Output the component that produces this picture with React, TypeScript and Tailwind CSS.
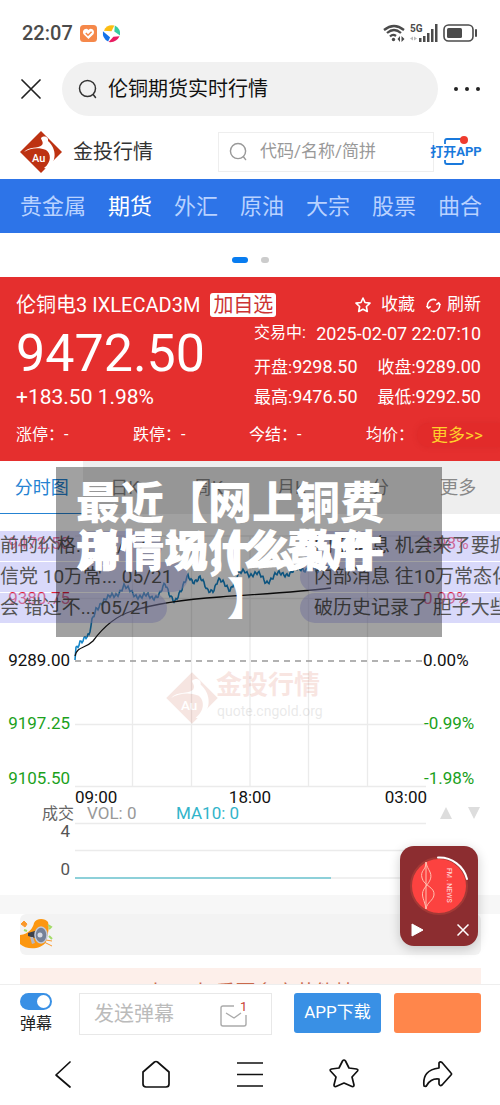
import React from "react";

const categories = ["贵金属", "期货", "外汇", "原油", "大宗", "股票", "曲合"];
const periods = ["分时图", "日K", "周K", "月K", "5分", "更多"];

const pricePoints: [number, number][] = [
  [75, 660], [76, 648], [80, 640], [85, 638], [89, 638], [92, 622], [96, 608], [101, 602],
  [107, 600], [112, 596], [118, 592], [124, 587], [127, 590], [134, 593], [142, 597], [152, 597],
  [160, 593], [165, 586], [169, 594], [175, 599], [182, 591], [188, 576], [194, 580], [200, 579],
  [207, 590], [214, 588], [218, 581], [223, 584], [230, 588], [237, 577], [245, 571], [250, 573],
  [258, 575], [266, 581], [275, 576], [290, 572], [300, 570], [310, 566], [318, 575], [322, 564],
  [331, 566],
];

function buildPricePath() {
  let path = "M75 660";
  for (let i = 1; i < pricePoints.length; i++) {
    const [x0, y0] = pricePoints[i - 1];
    const [x1, y1] = pricePoints[i];
    const steps = Math.max(1, Math.round(x1 - x0));
    for (let s = 1; s <= steps; s++) {
      const x = x0 + ((x1 - x0) * s) / steps;
      const wobble = Math.sin(x * 12.9) * 2.6 + Math.sin(x * 4.7) * 1.8;
      const y = y0 + ((y1 - y0) * s) / steps + wobble;
      path += ` L${x.toFixed(1)} ${y.toFixed(1)}`;
    }
  }
  return path;
}

function GoldLogo({ className }: { className?: string }) {
  return (
    <svg viewBox="0 0 44 44" className={className} aria-hidden="true">
      <path d="M22 1 43 22 22 43 1 22Z" fill="#bd3212" />
      <path
        d="M5 22C10 16 19 19 23 15C25 12 22 10 22 8C25 5 30 7 29 11C38 19 38 32 28 39L25 38C33 32 32 23 27 20C20 17 11 18 5 22Z"
        fill="#fff"
      />
      <text x="13" y="32" fill="#fff" fontSize="11" className="font-medium">Au</text>
    </svg>
  );
}

function StatusBar() {
  return (
    <div className="flex h-[62px] items-center px-[22px] pt-1 text-[#4b4b4b]">
      <span className="text-[20px] font-medium leading-6">22:07</span>
      <svg viewBox="0 0 17 17" className="ml-[7px] size-[17px]" aria-hidden="true">
        <rect width="17" height="17" rx="3.5" fill="#f5884a" />
        <path d="M8.5 14 3.6 9.2C1.500 6 5.500 1.800 8.500 5C11.500 1.800 15.500 6 13.400 9.200Z" fill="#fff" />
        <path d="m5.800 8 2.200 2.200 3.600-3.400" fill="none" stroke="#f5884a" strokeWidth="1.500" />
      </svg>
      <svg viewBox="0 0 20 20" className="ml-[5px] size-[19px]" aria-hidden="true">
        <path d="M2 7Q5 0 13 1.500L10 7.500Z" fill="#fcbd12" />
        <path d="M13.500 1.500Q20 5 19 12L13 8Z" fill="#35cda1" />
        <path d="M18.500 13Q15 20 7 19L12 13.500Z" fill="#e91c61" />
        <path d="M6.500 18.500Q0 15 1 7.500L8.500 14Z" fill="#1473eb" />
      </svg>
      <div className="ml-auto flex items-center gap-[5px]">
        <svg viewBox="0 0 22 18" className="h-[18px] w-[22px]" fill="none" stroke="#4b4b4b" strokeWidth="2.3" aria-hidden="true">
          <path d="M1 6Q11-2 21 6M4 9Q11 3 18 9M7 12.500Q10 9.500 13 12" />
          <circle cx="10.500" cy="15.500" r="1.700" fill="#4b4b4b" stroke="none" />
          <path d="m14.500 15 2.500-3v6Zm7 0-3-3v6Z" fill="#4b4b4b" stroke="none" />
        </svg>
        <svg viewBox="0 0 28 18" className="h-[18px] w-7" fill="#4b4b4b" aria-hidden="true">
          <text x="0" y="8" fontSize="10" className="font-bold">5G</text>
          <path d="M9 14h2.500v4H9zM13 12h2.500v6h-2.500zM17 9h2.500v9H17zM21 5h2.500v13H21zM25 0h2.500v18H25z" />
          <path d="m0 14.500 3-2v4Zm7 0-3-2v4Z" fill="#bbb" />
        </svg>
        <svg viewBox="0 0 35 18" className="h-[18px] w-[35px]" aria-hidden="true">
          <rect x="1" y="1" width="29" height="16" rx="4.500" fill="none" stroke="#4b4b4b" strokeWidth="1.600" />
          <rect x="4" y="4" width="15" height="10" rx="1.500" fill="#4b4b4b" />
          <path d="M33 6v6" stroke="#4b4b4b" strokeWidth="2" strokeLinecap="round" />
        </svg>
      </div>
    </div>
  );
}

function SearchIcon({ className }: { className?: string }) {
  return (
    <svg viewBox="0 0 20 20" className={className} fill="none" stroke="currentColor" strokeWidth="1.500" strokeLinecap="round" aria-hidden="true">
      <circle cx="9.500" cy="9.500" r="8" />
      <path d="m15.200 15.500 2.300 3" />
    </svg>
  );
}

function BrowserHeader() {
  return (
    <div className="flex items-center pr-[19px] pl-[21px]">
      <button aria-label="关闭" className="size-5">
        <svg viewBox="0 0 20 20" stroke="#222" strokeWidth="1.700" strokeLinecap="round">
          <path d="m1 1 18 18M19 1 1 19" />
        </svg>
      </button>
      <button className="ml-[21px] flex h-[54px] flex-1 items-center gap-[10px] rounded-full bg-[#f1f1f1] pl-4 text-[20px] text-[#111]">
        <SearchIcon className="size-5 text-[#333]" />
        伦铜期货实时行情
      </button>
      <button aria-label="更多选项" className="ml-[15px]">
        <svg viewBox="0 0 28 6" className="h-[6px] w-7" fill="#222">
          <circle cx="3" cy="3" r="2" /><circle cx="14" cy="3" r="2" /><circle cx="25" cy="3" r="2" />
        </svg>
      </button>
    </div>
  );
}

function SiteHeader() {
  return (
    <header className="flex h-[63px] items-center pt-2 pr-[18px] pl-[19px]">
      <GoldLogo className="size-11" />
      <h1 className="ml-[10px] text-[20px] text-[#333]">金投行情</h1>
      <label className="ml-auto flex h-10 w-[216px] items-center border border-[#eee] pl-[10px] text-[#999]">
        <SearchIcon className="size-[19px] shrink-0" />
        <input aria-label="搜索行情" placeholder="代码/名称/简拼" className="ml-3 w-full min-w-0 text-[17px] outline-none placeholder:text-[#999]" />
      </label>
      <a href="#app" className="relative -ml-1 flex h-8 w-[52px] shrink-0 items-center justify-center text-[13px] font-bold whitespace-nowrap text-[#1979dc]">
        <svg viewBox="0 0 52 32" className="absolute inset-0" fill="none" stroke="#1979dc" strokeWidth="1.800" aria-hidden="true">
          <path d="M15 8V5q0-2 2-2h15M15 24v2q0 2 2 2h14q2 0 2-2v-2" />
          <circle cx="34" cy="4" r="4" fill="#ef3b2d" stroke="none" />
        </svg>
        <span className="relative">打开APP</span>
      </a>
    </header>
  );
}

function Stat({ label, value }: { label: string; value: string }) {
  return (
    <span className="text-[17px] whitespace-nowrap">
      {label}:<span className="text-[18px]">{value}</span>
    </span>
  );
}

function QuotePanel() {
  return (
    <section className="bg-[#e52f2e] pt-[14px] pb-3 text-white">
      <div className="flex h-7 items-center pr-[19px] pl-4">
        <h2 className="text-[20px] whitespace-nowrap">伦铜电3 IXLECAD3M</h2>
        <button className="ml-[10px] h-6 rounded-[3px] bg-white px-[3px] text-[20px] leading-6 whitespace-nowrap text-[#cc3434]">加自选</button>
        <button className="ml-auto flex items-center gap-[10px] text-[17px]">
          <svg viewBox="0 0 16 16" className="size-4" fill="none" stroke="#fff" strokeWidth="1.600" strokeLinejoin="round" aria-hidden="true">
            <path d="m8 1 2 4.500 5 .6-3.600 3.400.9 5L8 12.200 3.700 14.500l.9-5L1 6.100l5-.6Z" />
          </svg>
          收藏
        </button>
        <button className="ml-[11px] flex items-center gap-[6px] text-[17px]">
          <svg viewBox="0 0 16 16" className="size-[15px]" fill="none" stroke="#fff" strokeWidth="1.600" aria-hidden="true">
            <path d="M2.500 11A6.200 6.200 0 0 1 11 2.500M5 13.500A6.200 6.200 0 0 0 13.500 5M.5 8.500l2 2.500 2.500-2M15.500 7.500l-2-2.500-2.500 2" />
          </svg>
          刷新
        </button>
      </div>
      <div className="flex justify-between pr-[19px] pl-4">
        <div>
          <p className="mt-[9px] text-[52px] leading-[52px]">9472.50</p>
          <p className="mt-[5px] text-[21px] leading-6">+183.50 1.98%</p>
        </div>
        <div className="flex w-[227px] flex-col">
          <p className="flex h-7 items-center justify-between text-[16px] whitespace-nowrap">
            交易中: <time className="text-[18px]">2025-02-07 22:07:10</time>
          </p>
          <p className="mt-[5px] flex h-[30px] items-center justify-between"><Stat label="开盘" value="9298.50" /><Stat label="收盘" value="9289.00" /></p>
          <p className="flex h-[30px] items-center justify-between"><Stat label="最高" value="9476.50" /><Stat label="最低" value="9292.50" /></p>
        </div>
      </div>
      <div className="mt-[9px] grid h-7 grid-cols-[117px_116px_117px_1fr] items-center pl-4 text-[16px]">
        <span>涨停：-</span><span>跌停：-</span><span>今结：-</span>
        <div className="flex items-center justify-between">
          <span>均价：</span>
          <button className="h-6 w-[83px] rounded-l-full bg-[#e22b2a] pl-[14px] text-left text-[17px] leading-6 text-[#ffd02b] shadow-[0_0_5px_#c9252566]">更多&gt;&gt;</button>
        </div>
      </div>
    </section>
  );
}

function PriceChart() {
  return (
    <svg viewBox="0 514 500 381" className="block w-full" role="img" aria-label="伦铜电3分时走势">
      <g fill="none" stroke="#ebebeb" strokeWidth="1.300">
        <path d="M75 536H426M75 598.500H426M75 724.500H426M75 786.500H426M132.500 536V786.500M191.500 536V786.500M250 536V786.500M308.500 536V786.500M367.500 536V786.500" />
        <path d="M75 823.500H426M75 850.500H426M75 878H426" />
      </g>
      <g opacity=".12">
        <svg x="165" y="671" width="54" height="54"><GoldLogo /></svg>
        <text x="216" y="694" fontSize="26" fill="#cc3010" className="[font-family:'Noto_Sans_CJK_SC',sans-serif] font-bold">金投行情</text>
        <text x="217" y="716" fontSize="14" fill="#555">quote.cngold.org</text>
      </g>
      <path d="M75 661H422" stroke="#999" strokeWidth="1.300" strokeDasharray="6 5" />
      <path d={buildPricePath()} fill="none" stroke="#1686c9" strokeWidth="1.600" />
      <path d="M75 656C77 646 85 649 93 641C104 626 116 616 132 611C160 602 190 599 220 597C260 594 300 592 331 588" fill="none" stroke="#111" strokeWidth="1.300" />
      <path d="M75 878H331" stroke="#6dc6d2" strokeWidth="1.500" />
      <g fontSize="17" fill="#111">
        <g textAnchor="end">
          <text x="70" y="549" fill="#e5203a">9472.50</text>
          <text x="70" y="604" fill="#e5203a">9380.75</text>
          <text x="70" y="666">9289.00</text>
          <text x="70" y="729" fill="#1ba11b">9197.25</text>
          <text x="70" y="784" fill="#1ba11b">9105.50</text>
          <text x="70" y="837" fill="#555">4</text>
          <text x="70" y="875" fill="#555">0</text>
        </g>
        <text x="423" y="549" fill="#e5203a">1.98%</text>
        <text x="423" y="604" fill="#e5203a">0.99%</text>
        <text x="423" y="666">0.00%</text>
        <text x="424" y="729" fill="#1ba11b">-0.99%</text>
        <text x="424" y="784" fill="#1ba11b">-1.98%</text>
        <text x="75" y="803">09:00</text>
        <text x="250" y="803" textAnchor="middle">18:00</text>
        <text x="427" y="803" textAnchor="end">03:00</text>
        <text x="87" y="819" fill="#999">VOL: 0</text>
        <text x="176" y="819" fill="#32b4ca">MA10: 0</text>
      </g>
      <text x="42" y="819" fontSize="16" fill="#666">成交</text>
      <path d="m440 819 6-12 6 12ZM468 807h12l-6 12Z" fill="#ddd" />
    </svg>
  );
}

function BulletComments() {
  const left = "h-[30px] rounded-r-full bg-[#b4b4f5]/50 pr-4 whitespace-nowrap";
  const right = "h-[30px] rounded-l-full bg-[#b4b4f5]/50 pl-[14px] whitespace-nowrap";
  return (
    <div className="absolute inset-x-0 top-[17px] flex justify-between overflow-hidden text-[19px] leading-[30px] text-[#555]">
      <div className="flex flex-col items-start gap-px">
        <p className={left}>前的价格... 05/17</p>
        <p className={left}>信党 10万常... 05/21</p>
        <p className={left}>会 错过不... 05/21</p>
      </div>
      <div className="flex w-[200px] flex-col gap-px">
        <p className={right}>内部消息 机会来了要抓</p>
        <p className={right}>内部消息 往10万常态化</p>
        <p className={right}>破历史记录了 胆子大些</p>
      </div>
    </div>
  );
}

function TitleOverlay() {
  return (
    <div className="absolute top-[6px] right-[58px] left-14 h-[170px] bg-black/37 pt-[9px] text-center text-[44px] leading-[48px] font-black whitespace-nowrap text-white [font-family:'Noto_Sans_CJK_SC',sans-serif]">
      <p className="px-5 text-left">最近【网上铜费</p>
      <div className="grid px-5 text-left">
        <span className="col-start-1 row-start-1">用情况什么软件</span>
        <span className="col-start-1 row-start-1">详情场,(么费用</span>
      </div>
      <p>】</p>
    </div>
  );
}

function AudioWidget() {
  return (
    <aside className="absolute right-[22px] -bottom-[51px] flex h-[100px] w-[78px] flex-col items-center rounded-[14px] bg-[#8c2d30] pt-[10px] shadow-[0_3px_12px_#0003]">
      <svg viewBox="0 0 60 60" className="size-[60px]" role="img" aria-label="FM.NEWS">
        <circle cx="30" cy="30" r="28" fill="#fc4240" stroke="#a43936" strokeWidth="2" />
        <g fill="none" stroke="#ffc0b0" strokeWidth="1">
          <path d="M17 6C17 15 11 14 13 22C15 30 26 31 25 39C24 45 18 46 17 53C16 44 11 40 15 33C19 27 24 23 21 16C19 12 18 11 17 6V53" />
        </g>
        <path d="M29 1.500A28.500 28.500 0 0 1 58 23" fill="none" stroke="#fff" strokeWidth="2" strokeLinecap="round" />
        <text transform="translate(38 12) rotate(90)" fontSize="7" fill="#ffe0e0">FM . NEWS</text>
      </svg>
      <div className="flex w-full items-center justify-between pr-[9px] pl-[11px] pt-[7px]">
        <button aria-label="播放">
          <svg viewBox="0 0 13 14" className="h-[14px] w-[13px]"><path d="m1 1 11 6-11 6Z" fill="#fff" stroke="#fff" strokeLinejoin="round" /></svg>
        </button>
        <button aria-label="关闭播放器">
          <svg viewBox="0 0 12 12" className="size-3" stroke="#fff" strokeWidth="1.500"><path d="m.5.5 11 11M11.500.5l-11 11" /></svg>
        </button>
      </div>
    </aside>
  );
}

function Feed() {
  return (
    <section>
      <div className="h-[19px] bg-[#f7f7f7]" />
      <div className="mr-[19px] ml-5 h-[41px] rounded-md bg-[#f3f3f3]">
        <svg viewBox="0 0 34 41" className="h-[41px] w-[34px]" aria-hidden="true">
          <path d="M0 21C9 20 13 14 14 9C16 4 25 4 28 8C30 16 27 21 26 28C21 36 6 36 0 30Z" fill="#fc9710" />
          <path d="m1 10 3-3 3 3-2 3ZM24 28l8 4M26 26l6 1" fill="#fa982c" stroke="#fa982c" />
          <path d="m28 11 3 2-2 2M29 22l3 3M4 16l3 1" stroke="#a4dc68" strokeWidth="2" fill="none" />
          <path d="m8 19 10-3v9l-10-3Z" fill="#3c404a" />
          <path d="m10 23 2 7 3-1-2-6Z" fill="#b8b8c2" />
          <ellipse cx="21" cy="21" rx="6" ry="8" fill="#758198" stroke="#c3c9d8" strokeWidth="1.500" />
          <circle cx="20" cy="21" r="2.500" fill="#d9dce4" />
        </svg>
      </div>
      <div className="mt-[13px] mr-[19px] ml-5 h-4 overflow-hidden bg-[#fdefea] text-center text-[20px] text-[#c9694b]">
        <p className="pt-[13px] leading-6">十二 十 重要多方节能情</p>
      </div>
    </section>
  );
}

function BottomBars() {
  return (
    <footer className="border-t border-[#eee] bg-white">
      <div className="flex h-[57px] items-start pt-2 pr-[19px] pl-5">
        <label className="w-8 shrink-0 text-[16px] text-[#222]">
          <input type="checkbox" defaultChecked className="peer sr-only" />
          <span className="flex h-[17px] items-center justify-end rounded-full bg-[#3990e5] px-[2px]">
            <span className="size-[13px] rounded-full bg-white" />
          </span>
          <span className="mt-[2px] block leading-6">弹幕</span>
        </label>
        <div className="ml-[27px] flex h-[42px] min-w-0 flex-1 items-center border border-[#e8e8e8] pl-[14px] pr-6">
          <input aria-label="发送弹幕" placeholder="发送弹幕" className="w-full min-w-0 text-[20px] outline-none placeholder:text-[#bbb]" />
          <button aria-label="1条消息" className="shrink-0">
            <svg viewBox="0 0 27 28" className="h-7 w-[27px]" fill="none" stroke="#aaa" strokeWidth="1.400">
              <path d="M14 6H3Q1 6 1 8V24q0 2 2 2H24q2 0 2-2V15M6 13l8 5 7-5" />
              <text x="20" y="11" fontSize="13" fill="#c84034" stroke="none">1</text>
            </svg>
          </button>
        </div>
        <button className="ml-[22px] h-10 w-[87px] shrink-0 rounded-[3px] bg-[#3990e5] text-[17px] whitespace-nowrap text-white">APP下载</button>
        <button aria-label="活动" className="ml-[13px] h-10 w-[87px] shrink-0 rounded-[3px] bg-[#ff864b]" />
      </div>
      <nav className="grid h-[63px] grid-cols-5 items-center justify-items-center px-4">
        <button aria-label="后退">
          <svg viewBox="0 0 20 30" className="h-[30px] w-5" fill="none" stroke="#111" strokeWidth="1.700" strokeLinecap="round" strokeLinejoin="round"><path d="M17 3 3 16l14 12" /></svg>
        </button>
        <button aria-label="主页">
          <svg viewBox="0 0 30 30" className="size-[30px]" fill="none" stroke="#111" strokeWidth="1.700" strokeLinejoin="round"><path d="M2 13 13.500 3q1.500-1 3 0L28 13V25q0 3-3 3H5q-3 0-3-3Z" /></svg>
        </button>
        <button aria-label="菜单">
          <svg viewBox="0 0 28 30" className="h-[30px] w-7" stroke="#111" strokeWidth="1.700"><path d="M1 4H27M1 15.500H27M1 27H27" /></svg>
        </button>
        <button aria-label="收藏夹">
          <svg viewBox="0 0 30 30" className="size-[30px]" fill="none" stroke="#111" strokeWidth="1.700" strokeLinejoin="round"><path d="M13.500 2q1.500-2 3 0L20 9l7.500 1q2 .5 1 2L23 18l2 8q0 2-2 1.500L15 24l-8 3.500Q5 28 5 26l2-8-5.500-6q-1-1.500 1-2L10 9Z" /></svg>
        </button>
        <button aria-label="分享">
          <svg viewBox="0 0 32 30" className="h-[30px] w-8" fill="none" stroke="#111" strokeWidth="1.700" strokeLinejoin="round"><path d="M18 9V4q1-2 3-.5L30 14q1 1 0 2L21 26q-2 1.500-3-1v-5q-8-1-12 6-1 2-3 1Q1 11 18 9Z" /></svg>
        </button>
      </nav>
    </footer>
  );
}

export default function App() {
  return (
    <main className="w-full overflow-x-hidden bg-white leading-normal [font-family:Roboto,'Noto_Sans_CJK_SC',sans-serif]">
      <StatusBar />
      <BrowserHeader />
      <SiteHeader />
      <nav className="flex h-[54px] items-center gap-[22px] overflow-hidden bg-[#2d74e8] px-5 text-[22px] whitespace-nowrap text-[#b9d2ff]">
        {categories.map((name) => (
          <a key={name} href="#category" className={name === "期货" ? "text-white" : ""}>{name}</a>
        ))}
      </nav>
      <div className="flex h-11 items-end justify-center gap-[13px] pb-[14px]">
        <span className="h-[6px] w-4 rounded-full bg-[#087cf0]" />
        <span className="h-[6px] w-2 rounded-full bg-[#ccc]" />
      </div>
      <QuotePanel />
      <div className="relative">
        <nav className="grid h-[53px] grid-cols-6 bg-[#eee] text-[18px] text-[#888]">
          {periods.map((name, i) => (
            <button key={name} className={i === 0 ? "border-b border-[#2583d2] bg-white text-[#2583d2]" : ""}>{name}</button>
          ))}
        </nav>
        <div className="relative">
          <PriceChart />
          <BulletComments />
        </div>
        <TitleOverlay />
        <AudioWidget />
      </div>
      <Feed />
      <BottomBars />
    </main>
  );
}
